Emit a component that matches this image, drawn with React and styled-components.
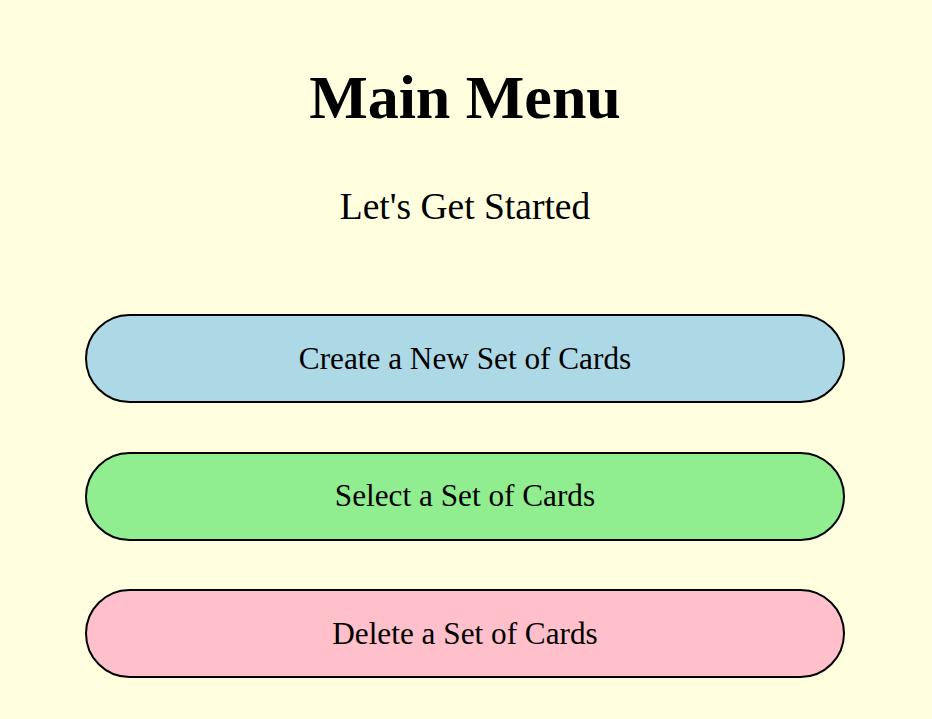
import styled, { createGlobalStyle } from 'styled-components';

const GlobalStyle = createGlobalStyle`
  html, body {
    margin: 0;
    padding: 0;
    background: lightyellow;
  }
  body {
    font-family: "Liberation Serif", "Times New Roman", serif;
    color: black;
  }
`;

const Page = styled.div`
  min-height: 719px;
  display: flex;
  flex-direction: column;
  align-items: center;
  padding: 66px 2px 0 0;
  box-sizing: border-box;
`;

const Title = styled.h1`
  margin: 0;
  font-size: 62px;
  line-height: 62px;
  font-weight: bold;
`;

const Subtitle = styled.p`
  margin: 60px 0 0;
  font-size: 37.5px;
  line-height: 37px;
`;

const Menu = styled.div`
  margin-top: 89px;
  display: flex;
  flex-direction: column;
  gap: 48.5px;
`;

const MenuButton = styled.button`
  box-sizing: border-box;
  width: 760px;
  height: 89px;
  border: 2px solid black;
  border-radius: 45px;
  background: ${p => p.$color};
  font-family: "Liberation Serif", "Times New Roman", serif;
  font-size: 31.25px;
  color: black;
  cursor: pointer;
`;

const items = [
  { label: 'Create a New Set of Cards', color: 'lightblue' },
  { label: 'Select a Set of Cards', color: 'lightgreen' },
  { label: 'Delete a Set of Cards', color: 'pink' },
];

export default function App() {
  return (
    <>
      <GlobalStyle />
      <Page>
        <Title>Main Menu</Title>
        <Subtitle>Let's Get Started</Subtitle>
        <Menu>
          {items.map(item => (
            <MenuButton key={item.label} $color={item.color}>{item.label}</MenuButton>
          ))}
        </Menu>
      </Page>
    </>
  );
}
